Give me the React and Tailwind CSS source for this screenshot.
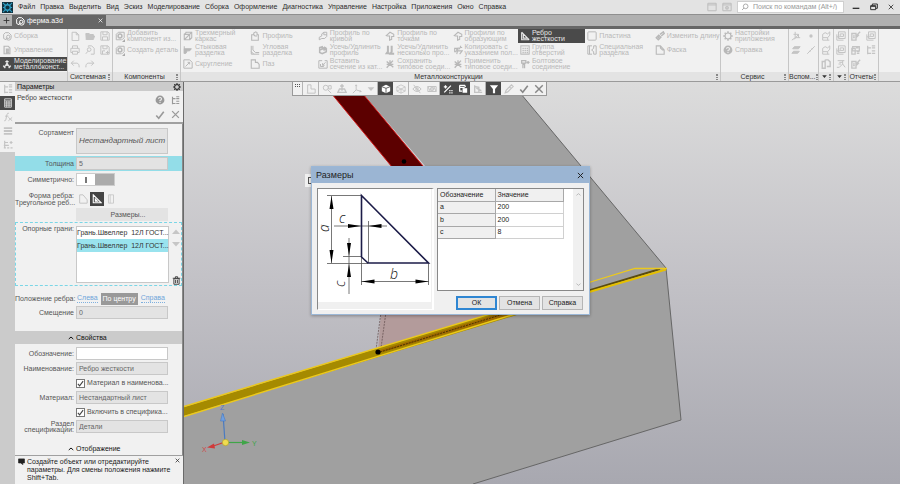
const PATHS = {
  assembly: <><path d="M2 9V4l2-2h4l3 3v3a3 3 0 0 1-6 0" /><circle cx="7.5" cy="7" r="2" /><path d="M2 9l3 1.500" /></>,
  manage: <path d="M2.500 1.500h5l2 2v7h-7z M4.500 5h4M4.500 7h4M4.500 9h4M5.500 5v5M7.200 5v5" strokeWidth="1.400" />,
  metal: <><path d="M6 1.500v5M6 6.500L2 10M6 6.500l4 3.500M4 3l4 0M1.500 8l2.500 3M10.500 8L8 11" strokeWidth="1.500" /><circle cx="6" cy="6.500" r="1.200" fill="currentColor" /></>,
  file: <path d="M2.500 1.500h5l3 3v7h-8z M7.500 1.500v3h3" />,
  folder: <path d="M1 3h4l1 1.200h4V6H3L1.500 10zM3.200 6H11.500L10 10.200H1.500z" fill="currentColor" />,
  save: <path d="M1 1h8.500L11 2.500V11H1zM3.500 1v3.500h5V1M3 11V7h6v4" />,
  saveall: <path d="M1 1h8.500L11 2.500V11H1zM3.500 1v3.500h5V1M3 11V7h3M7 9h4M9 7v4" />,
  print: <path d="M3 4V1h6v3M3 9H1V4h10v5H9M3 7.500h6V11H3z" />,
  preview: <><path d="M4 2V1h4l3 3v7H7" /><circle cx="5" cy="5.500" r="2.200" /><path d="M3.500 7.500L1 10.500" /></>,
  undo: <path d="M4.500 2L1.500 5l3 3M1.500 5H8q3 0 3 5" />,
  redo: <path d="M7.500 2l3 3-3 3M10.500 5H4Q1 5 1 10" />,
  gearbox: <><path d="M1.500 4V10.500H8M1.500 4L4 1.500h7V8L8.500 10.500" /><circle cx="6" cy="6" r="2.300" strokeWidth="1.800" /></>,
  frame: <path d="M1.500 4h6.500v6.500H1.500zM1.500 4L4 1.500h6.500V8L8 10.500M8 4l2.500-2.500M1.500 10.500L8 4M3 1.500h2" strokeWidth="1.300" />,
  butt: <path d="M1.500 1.500v9M1.500 4.500H10L8 7H5L3.500 10H1.500z" fill="currentColor" />,
  fillet: <path d="M1 1h7l3 3v7H1zM3 9l5-5M5.500 4H8v2.500" />,
  profile: <path d="M2 4.500V11h8V4.500H8.500V2L7 1 4.500 2.500v2z M4.500 4.500l1.500 1.500h2.500" strokeWidth="1.300" />,
  corner: <path d="M1.500 1v10H11M3.500 1v5L6.500 9H11M1.500 8l3 3" />,
  groove: <path d="M1.500 1h5v3h2.500l2 2.500V11h-9.500z" strokeWidth="1.300" />,
  curve: <path d="M1.500 10.500V7.500l3-1.500V3.500L7 1.500h3.500v5L8 9H4.500zM7 1.500v3H10.500" />,
  points: <path d="M1.500 5.500L6 1.500 10.500 4v2.500H8V10L5.500 11V6H3z" strokeWidth="1.300" />,
  trim: <path d="M2 3v6l3 1.500 5-2.500V5L7.500 6V3L5 4.500V2zM2 6l8-3" strokeWidth="1.800" />,
  bars: <path d="M3.500 1v7L2 10h3.500M8 1v7L6.500 10.500H11" strokeWidth="2.400" />,
  copy: <path d="M2 4h3L3.500 8H2zM7.500 5l2-4M5 7h6L8 11M6.500 3l-2 8M9 3h2" strokeWidth="1.300" />,
  insert: <path d="M1 2h4M8 2h3v9H1V2M3 6v3h4M9 4L5.500 7.500M5.500 5v2.500H8" />,
  cross: <path d="M2 10.500L9.500 2M2 3l8 7M6 1.500v4M2 6.500h8" strokeWidth="1.600" />,
  rib: <path d="M2 1.500V10.500H11M4 3.500l5 5H4z M2 1.500l2 2M9 8.500l2 2" strokeWidth="1.400" />,
  holes: <><rect x="1" y="1" width="10" height="10" /><path d="M3 4h1.500M5.500 4H7M8 4h1.500M3 6.500h1.500M5.500 6.500H7M8 6.500h1.500M3 9h1.500M5.500 9H7M8 9h1.500" strokeWidth="1.600" /></>,
  bolt: <path d="M2 2h5v3H2zM3 6.500h3M3.500 5v6M5.500 5v6M8 4h3.500M9.700 2.500v3.500" strokeWidth="1.500" />,
  plate: <rect x="1" y="1" width="10" height="10" rx="1" />,
  special: <path d="M6 1H1v10h5M11 1H8v3L5.500 6 8 8v3h3zM3 1v10" />,
  length: <path d="M1.500 8L4.500 5l2.500 2.500L4 10.500zM6 4l4-3 1 2-3.500 3M3 6.500l2 2" strokeWidth="1.700" />,
  chamfer: <path d="M1.500 1h5l4.500 5V11H1.500z M6.500 1v2.500L9 6h2" strokeWidth="1.300" />,
  gear: <><circle cx="6" cy="6" r="3.600" strokeWidth="1.400" /><path d="M6 .3v2M6 9.700v2M.3 6h2M9.700 6h2M2 2l1.300 1.300M8.700 8.700L10 10M10 2L8.700 3.300M3.300 8.700L2 10" strokeWidth="1.700" /></>,
  help: <><circle cx="6" cy="6" r="5.300" fill="currentColor" stroke="none" /><path d="M4.200 4.600Q4.300 3 6 3t1.800 1.500T6 6.500v1M6 8.500v1.200" stroke="#f1f1f1" strokeWidth="1.300" /></>,
  axis: <path d="M5 1v7L1 11M5 8h6M3 4h6v4M9 4L4 10" />,
  dot: <circle cx="6" cy="6" r="2" fill="currentColor" stroke="none" />,
  planes: <path d="M4 2h7L9 4.500H2zM3 7.500h7L8 10H1z" fill="currentColor" />,
  line: <path d="M1.500 10.500l9-9M3.500 7.500h2M6.500 4.500h2" />,
  sketch: <path d="M2 4l3-2 3 1.500L10.500 1v4L8 8H2zM2 8v3h8M8 8v3" />,
  pages: <path d="M1.500 3H5v8H1.500zM5 1h3.500L11 3.500V9H7M5 1v8" strokeWidth="1.700" />,
  sheet: <path d="M3 1h8v8H3zM1 4v7h8M5 3.500h4v3H5zM1 7h4" />,
  flow: <path d="M2 2h8M8 2v4L4 10H1M6 6H3M8 6l3 4M4 4h4" />,
  note: <path d="M1 3h5v8H1zM8 4l3-3M6 6l2-2 1 1-2 2zM2.500 6h2M2.500 8h2" strokeWidth="1.600" />,
  report: <path d="M2 2h8v5H2zM1 4h4v7H1zM7 8h3M7 10h3M6 3.500h3" strokeWidth="1.500" />,
  tree: <path d="M2 1v10M2 3.500h4M2 10h4M7 3.500h4M7 1h4M7 10h4M7 7h4" strokeWidth="1.500" />,
  grid: <path d="M2 1h8v10H2zM2 3.500h8M2 6h8M2 8.500h8M4.500 3.500V11M7.200 3.500V11" strokeWidth="1" />,
  rows: <path d="M1 2.500h10M1 6h10M1 9.500h10" strokeWidth="2.200" />,
  treeplus: <path d="M2 1v8M2 3h4M8 3h3.500M9.700 1.200v3.600M1 9.500h2.500M5 9.500h2.500M9 9.500h2.500M1 6.500h6" strokeWidth="1.400" />,
  fx: <path d="M7 1.500Q5.200 1 4.800 3L3.300 9.500Q2.800 11 1.500 10.500M2.500 5h4M6.500 6.500l4.500 4M11 6.500l-4.500 4" />,
  check: <path d="M1.500 6.500l3 3.500L10.500 2" strokeWidth="1.900" />,
  x: <path d="M1.500 1.500l9 9M10.500 1.500l-9 9" strokeWidth="1.700" />,
  lshape: <path d="M2 1h4v5h5v5H2zM1 11h1" />,
  zoomin: <><circle cx="4.500" cy="4.500" r="3" /><path d="M7 7l4 4M8 2v4h3V2z" /></>,
  plane: <path d="M3 6h6l2 4H1zM6 8V1M4 3l2-2 2 2" strokeWidth="1.700" />,
  axes: <path d="M5 1v6l6 2M5 7l-4 4M4 2.500L5 1l1 1.500M9.500 7.500L11 9l-2 .5" />,
  cube: <><path d="M6 1l5 2.200v5.600L6 11 1 8.800V3.200z" fill="currentColor" stroke="none" /><path d="M1 3.200l5 2 5-2M6 5.200V11" stroke="#4a4a4a" strokeWidth="1" /></>,
  wirecube: <path d="M6 1l5 2.500v5L6 11 1 8.500v-5zM1 3.500L6 6l5-2.500M6 6v5M1 8.500L6 6l5 2.500" strokeWidth="1" />,
  eyeoff: <><path d="M1 6q5-6 10 0Q6 12 1 6M2 1l8 10" /><circle cx="6" cy="6" r="1.500" /></>,
  hidden: <><path d="M1 3h10v6H1zM1 3l3 6M8 3l3 6" /><circle cx="6" cy="6" r="1.700" strokeWidth="1.600" /></>,
  snap: <path d="M1.500 10l8-8M1 3.500h4M3 1.500v4M7.500 8h1.500M10 8h1.500M7.500 10.500h1.500M10 10.500h1.500" strokeWidth="1.500" />,
  view: <><path d="M2 1.500h6l1 2M2 1.500v7h3M2 4h6" strokeWidth="1.500" /><rect x="5.500" y="5" width="5.500" height="5.500" fill="currentColor" stroke="none" /></>,
  section: <path d="M2 1.500V10h9M2 3l5 1v6M4 5l6 3" strokeWidth="1.600" />,
  filter: <path d="M1 1.500h10L7.300 6v5H4.700V6z" fill="currentColor" stroke="none" />,
  pipette: <path d="M1.500 10.500l1-3 4-4 2 2-4 4zM7 3l2-2 2 2-2 2" strokeWidth="1.400" />,
  window: <path d="M1 1.500h10v9H1zM1 3.500h10" />,
  windowgear: <><path d="M1 1.500h10v9H1zM1 3.500h10" /><circle cx="6" cy="7" r="1.500" strokeWidth="1.500" /></>,
  search: <><circle cx="7" cy="5" r="3.500" /><path d="M4.500 7.500l-3 3" /></>,
  minus: <path d="M1 8h10" strokeWidth="2" />,
  restore: <path d="M1 4h7.500v6H1zM3.500 4V1.500H11V8H8.500M1 5h7.500" strokeWidth="1.500" />,
  plus: <path d="M6 1v10M1 6h10" strokeWidth="1.500" />,
  trash: <path d="M2.500 3.500h7v7.500h-7zM1 3h10M4.500 3V1h3v2M4.800 5v4.500M7.200 5v4.500" strokeWidth="1.300" />,
  speech: <path d="M1 1.500h10v7H7.500l1 2.800L4.500 8.500H1z" fill="currentColor" />,
  caret: <path d="M1.500 8L6 4l4.500 4" strokeWidth="2" />,
  down: <path d="M2 4h8L6 8.500z" fill="currentColor" stroke="none" />,
  shape1: <path d="M2 1h4l5 6v4H2z" />,
  shape2: <path d="M1.500 1v9.500H11zM4 6v2.500h2.500z" strokeWidth="1.300" />,
  shape3: <path d="M3 1h6v10H3zM5 1v10" strokeWidth="1" />,
  scrollup: <path d="M2.500 7.500L6 4.500l3.500 3" strokeWidth="1.300" />,
  scrolldown: <path d="M2.500 4.500L6 7.500l3.500-3" strokeWidth="1.300" />,
};

function Icon({ name, className = "size-[10px]" }) {
  return (
    <svg viewBox="0 0 12 12" className={`shrink-0 ${className}`} fill="none" stroke="currentColor" strokeWidth="1.200" aria-hidden="true">
      {PATHS[name]}
    </svg>
  );
}

const MENU = ["Файл", "Правка", "Выделить", "Вид", "Эскиз", "Моделирование", "Сборка", "Оформление", "Диагностика", "Управление", "Настройка", "Приложения", "Окно", "Справка"];

function MenuBar() {
  return (
    <header className="flex h-[15px] items-center border-b border-[#8f8f8f] bg-[#e3e3e3] pl-[2px]">
      <svg viewBox="0 0 12 12" className="mr-[5px] size-[11px] shrink-0" aria-hidden="true">
        <rect width="12" height="12" fill="#12323f" />
        <circle cx="6" cy="6" r="3" fill="none" stroke="#2f9fc4" strokeWidth="1.400" />
        <path d="M1 1l3 3M11 1L8 4M1 11l3-3M11 11L8 8M6 1v2M6 9v2M1 6h2M9 6h2" stroke="#2f9fc4" strokeWidth="1.100" />
      </svg>
      <nav className="flex gap-[5px] text-[#2c2c2c]">
        {MENU.map((m) => <button key={m}>{m}</button>)}
      </nav>
      <div className="ml-auto flex items-center gap-[5px] text-[#bdbdbd]">
        <Icon name="window" />
        <Icon name="windowgear" />
        <label className="flex h-3 w-[107px] items-center gap-1 border border-[#cfcfcf] bg-white px-[3px] text-[#999]">
          <Icon name="search" className="size-2" />
          <input aria-label="Поиск по командам" placeholder="Поиск по командам (Alt+/)" className="w-full min-w-0 bg-transparent outline-none placeholder:text-[#999]" />
        </label>
      </div>
      <div className="flex gap-[10px] pr-[6px] pl-[8px] text-[#333]">
        <button aria-label="Свернуть"><Icon name="minus" className="size-2" /></button>
        <button aria-label="Восстановить"><Icon name="restore" className="size-2" /></button>
        <button aria-label="Закрыть"><Icon name="x" className="size-[6px]" /></button>
      </div>
    </header>
  );
}

function TabBar() {
  return (
    <div className="flex h-[14px] border-b-[3px] border-[#666] bg-[#b0b0b0]">
      <button aria-label="Новый документ" className="flex w-3 items-center justify-center text-[#333]"><Icon name="plus" className="size-[7px]" /></button>
      <div className="flex w-[94px] items-center gap-[2px] bg-[#666] px-[3px] text-white">
        <Icon name="assembly" />
        <span className="flex-1">ферма.a3d</span>
        <button aria-label="Закрыть вкладку"><Icon name="x" className="size-[5px]" /></button>
      </div>
    </div>
  );
}

function Tool({ icon, text, active, tick }) {
  return (
    <button className={`relative flex h-[14px] w-full min-w-0 items-center gap-[2px] pl-[2px] text-left leading-[6px] whitespace-pre ${active ? "bg-[#4a4a4a] text-[#e8e8e8]" : "text-[#b8b8b8]"}`}>
      <Icon name={icon} />
      <span>{text}</span>
      {tick && <i className="absolute bottom-px left-[9px] border-b-[3px] border-l-[3px] border-b-[#aaa] border-l-transparent" />}
    </button>
  );
}

function Group({ title, width, children, grip = true, caret }) {
  return (
    <section className={`flex h-full flex-col border-r border-[#c6c6c6] ${width}`}>
      <div className="h-[43px]">{children}</div>
      <footer className="flex h-[9px] items-center bg-[#e3e3e3] pr-[2px] leading-none text-[#333]">
        <span className="flex flex-1 justify-center whitespace-nowrap">{caret ? <Icon name="down" className="size-[7px]" /> : title}</span>
        {grip && <span className="h-[6px] w-[2px] border-x border-dotted border-[#888]" />}
      </footer>
    </section>
  );
}

function IconGrid({ cols, icons }) {
  return (
    <div className={`grid h-[42px] grid-rows-3 place-items-center text-[#c4c4c4] ${cols}`}>
      {icons.map((n, i) => (
        <button key={i} aria-label={n}><Icon name={n} /></button>
      ))}
    </div>
  );
}

const METAL = [
  [["frame", "Трехмерный\nкаркас"], ["butt", "Стыковая\nразделка"], ["fillet", "Скругление"]],
  [["profile", "Профиль"], ["corner", "Угловая\nразделка"], ["groove", "Паз"]],
  [["curve", "Профиль по\nкривой"], ["trim", "Усечь/Удлинить\nпрофиль"], ["insert", "Вставить\nсечение из кат..."]],
  [["points", "Профиль по\nточкам"], ["bars", "Усечь/Удлинить\nнесколько про..."], ["cross", "Сохранить\nтиповое соеди..."]],
  [["points", "Профили по\nобразующим"], ["copy", "Копировать с\nуказанием пол..."], ["cross", "Применить\nтиповое соеди..."]],
  [["rib", "Ребро\nжесткости", true], ["holes", "Группа\nотверстий"], ["bolt", "Болтовое\nсоединение"]],
  [["plate", "Пластина"], ["special", "Специальная\nразделка"]],
  [["length", "Изменить длину"], ["chamfer", "Фаска"]],
];

function Ribbon() {
  return (
    <div className="flex h-[53px] border-b border-[#9a9a9a] bg-[#f1f1f1]">
      <Group width="w-[68px]" grip={false}>
        <Tool icon="assembly" text="Сборка" />
        <Tool icon="manage" text="Управление" />
        <Tool icon="metal" text={"Моделирование\nметаллоконст..."} active />
      </Group>
      <Group title="Системная" width="w-[45px]">
        <IconGrid cols="grid-cols-3" icons={["file", "folder", "save", "print", "preview", "saveall", "undo", "redo"]} />
      </Group>
      <Group title="Компоненты" width="w-[68px]">
        <Tool icon="gearbox" text={"Добавить\nкомпонент из..."} tick />
        <Tool icon="gearbox" text="Создать деталь" tick />
      </Group>
      <Group title="Металлоконструкции" width="min-w-0 flex-1">
        <div className="grid grid-cols-8">
          {METAL.map((col, i) => (
            <div key={i} className="min-w-0">
              {col.map(([icon, text, active]) => <Tool key={text} icon={icon} text={text} active={active} />)}
            </div>
          ))}
        </div>
      </Group>
      <Group title="Сервис" width="w-[68px]">
        <Tool icon="gear" text={"Настройки\nприложения"} />
        <Tool icon="help" text="Справка" />
      </Group>
      <Group title="Вспом..." width="w-[30px]">
        <IconGrid cols="grid-cols-2" icons={["axis", "dot", "planes", "line"]} />
      </Group>
      <Group caret width="w-[15px]"><IconGrid cols="grid-cols-1" icons={["sketch", "sketch", "pages"]} /></Group>
      <Group caret width="w-[15px]"><IconGrid cols="grid-cols-1" icons={["sheet", "sheet", "flow"]} /></Group>
      <Group title="Отчеты" width="w-[30px]">
        <IconGrid cols="grid-cols-2" icons={["note", "sheet", "report", "tree", "note"]} />
      </Group>
      <div className="flex w-[21px] flex-col justify-end"><div className="h-[9px] bg-[#e3e3e3]" /></div>
    </div>
  );
}

const SIDE = ["tree", "grid", "fx", "rows", "treeplus"];

function SideStrip() {
  return (
    <aside className="w-[15px] shrink-0 bg-[#cbcbcb]">
      {SIDE.map((n) => (
        <button key={n} aria-label={n} className={`flex h-[14px] w-full items-center justify-center ${n === "grid" ? "bg-[#4a4a4a] text-[#e8e8e8]" : "bg-[#f1f1f1] text-[#c4c4c4]"}`}>
          <Icon name={n} />
        </button>
      ))}
    </aside>
  );
}

function Field({ id, label, value, open, tint }) {
  return (
    <div className={`flex items-center gap-[2px] py-px pr-[14px] ${tint ? "bg-[#93dde8]" : ""}`}>
      <label htmlFor={id} className="w-[59px] shrink-0 text-right leading-[6px] whitespace-pre">{label}</label>
      <input id={id} defaultValue={value} className={`h-[13px] min-w-0 flex-1 border border-[#c8c8c8] px-[2px] text-[#666] outline-none ${open ? "bg-white" : "bg-[#e3e3e3]"}`} />
    </div>
  );
}

function Tick({ id, text }) {
  return (
    <label htmlFor={id} className="flex h-[14px] items-center gap-[2px] pl-[61px]">
      <span className="relative flex size-[9px] shrink-0">
        <input id={id} type="checkbox" defaultChecked className="size-[9px] appearance-none border border-[#777] bg-white" />
        <span className="pointer-events-none absolute inset-px text-[#444]"><Icon name="check" className="size-[7px]" /></span>
      </span>
      <span className="whitespace-nowrap">{text}</span>
    </label>
  );
}

function Panel() {
  return (
    <section className="flex w-[169px] shrink-0 flex-col border-r border-[#6a6a6a] bg-[#f1f1f1] text-[#555]">
      <h2 className="flex h-[9px] items-center justify-between bg-[#cbcbcb] px-[2px] leading-none text-[#111]">
        Параметры
        <button aria-label="Настройки панели"><Icon name="gear" className="size-2" /></button>
      </h2>
      <div className="flex h-[33px] justify-between border-b-2 border-[#a0a0a0] pt-[2px] pr-[3px] pl-[2px] text-[#444]">
        <span>Ребро жесткости</span>
        <div className="grid grid-cols-2 place-items-center gap-x-[5px] text-[#999]">
          <button aria-label="Справка"><Icon name="help" /></button>
          <button aria-label="Дерево"><Icon name="tree" className="size-[9px]" /></button>
          <button aria-label="Создать"><Icon name="check" /></button>
          <button aria-label="Отменить"><Icon name="x" className="size-[9px]" /></button>
        </div>
      </div>

      <div className="flex flex-1 flex-col border-r border-[#8a8a8a] pt-[4px]">
        <div className="mb-[2px] flex gap-[2px] pr-[14px]">
          <span className="w-[59px] shrink-0 text-right">Сортамент</span>
          <button className="h-[26px] min-w-0 flex-1 border border-[#c8c8c8] bg-[#e3e3e3] text-[8px] whitespace-nowrap text-[#555] italic">Нестандартный лист</button>
        </div>
        <Field id="thickness" label="Толщина" value="5" tint />
        <div className="mt-[2px] flex items-center gap-[2px]">
          <span className="w-[59px] text-right">Симметрично:</span>
          <button role="switch" aria-checked="false" aria-label="Симметрично" className="flex h-[13px] w-[39px] border border-[#ccc] bg-[#ababab]">
            <span className="flex h-full w-[18px] items-center justify-center bg-white"><i className="h-[6px] w-[2px] bg-[#777]" /></span>
          </button>
        </div>
        <div className="mt-[6px] flex items-center gap-[2px]">
          <span className="w-[59px] text-right leading-[7px] whitespace-nowrap">Форма ребра:<br />Треугольное реб...</span>
          <div className="flex text-[#c4c4c4]">
            <button aria-label="Срез" className="flex size-[14px] items-center justify-center"><Icon name="shape1" /></button>
            <button aria-label="Треугольник" className="flex size-[14px] items-center justify-center bg-[#444] text-white"><Icon name="shape2" /></button>
            <button aria-label="Прямоугольник" className="flex size-[14px] items-center justify-center"><Icon name="shape3" /></button>
          </div>
        </div>
        <button className="mt-[2px] mr-[14px] ml-[61px] h-[13px] bg-[#e3e3e3] pl-3">Размеры...</button>
        <div className="mt-px flex h-[64px] gap-[2px] border border-dashed border-[#7ad6e6] pt-[3px]">
          <span className="w-[58px] shrink-0 text-right leading-[6px] whitespace-nowrap">Опорные грани:</span>
          <ul className="mb-[2px] min-w-0 flex-1 border border-[#c8c8c8] bg-white text-[#333]">
            <li className="flex h-[12px] items-center whitespace-pre">Грань.Швеллер  12Л ГОСТ...</li>
            <li className="flex h-[13px] items-center bg-[#99e3ee] whitespace-pre">Грань.Швеллер  12Л ГОСТ...</li>
          </ul>
          <div className="flex w-[10px] shrink-0 flex-col items-center text-[#c6c6c6]">
            <button aria-label="Вверх" className="rotate-180"><Icon name="down" className="size-3" /></button>
            <button aria-label="Вниз"><Icon name="down" className="size-3" /></button>
            <button aria-label="Удалить" className="mt-auto text-[#444]"><Icon name="trash" className="size-[9px]" /></button>
          </div>
        </div>
        <div className="mt-[6px] flex h-[13px] items-center gap-[3px] whitespace-nowrap">
          <span className="w-[59px] shrink-0 text-right">Положение ребра:</span>
          <a href="#left" className="border-b border-dotted border-[#7fb0de] leading-[8px] text-[#6fa5da]">Слева</a>
          <button className="h-[12px] bg-[#999] px-[2px] text-white">По центру</button>
          <a href="#right" className="border-b border-dotted border-[#7fb0de] leading-[8px] text-[#6fa5da]">Справа</a>
        </div>
        <Field id="offset" label="Смещение" value="0" />
        <h3 className="mt-[11px] flex h-[13px] items-center gap-[2px] bg-[#cbcbcb] pl-[53px] text-[#111]"><Icon name="caret" className="size-[6px]" />Свойства</h3>
        <div className="mt-[2px]">
          <Field id="mark" label="Обозначение:" value="" open />
          <Field id="name" label="Наименование:" value="Ребро жесткости" />
          <Tick id="matname" text="Материал в наименова..." />
          <Field id="material" label="Материал:" value="Нестандартный лист" />
          <Tick id="spec" text="Включить в специфика..." />
          <Field id="section" label={"Раздел\nспецификации:"} value="Детали" />
        </div>
        <h3 className="mt-[8px] flex h-[13px] items-center gap-[2px] pl-[53px] text-[#111]"><Icon name="caret" className="size-[6px]" />Отображение</h3>
      </div>

      <div className="flex h-[29px] gap-[2px] border-t border-[#a0a0a0] px-[3px] pt-[2px] leading-[8px] text-[#222]">
        <Icon name="speech" className="size-[7px]" />
        <p className="flex-1 whitespace-pre">{"Создайте объект или отредактируйте\nпараметры. Для смены положения нажмите\nShift+Tab."}</p>
        <button aria-label="Закрыть подсказку" className="h-[5px]"><Icon name="x" className="size-[5px]" /></button>
      </div>
    </section>
  );
}

function Scene() {
  return (
    <svg viewBox="184 82 716 402" preserveAspectRatio="xMinYMin slice" className="absolute inset-0 h-full w-full" role="img" aria-label="Модель фермы">
      <defs>
        <linearGradient id="sky" x1="0" y1="0" x2="0" y2="1">
          <stop offset="0" stopColor="#dcdcdc" />
          <stop offset=".5" stopColor="#c2c1c6" />
          <stop offset="1" stopColor="#a8a8b0" />
        </linearGradient>
      </defs>
      <rect x="184" y="82" width="716" height="402" fill="url(#sky)" />
      <path d="M353 82H511L666 268 681 420 473 484H184V416L480 318V230z" fill="#a0a0a0" />
      <path d="M511 82L666 268 681 420 473 484" fill="none" stroke="#666" strokeWidth="1" />
      <path d="M322 82H353L438 184H406z" fill="#5c0000" stroke="#d01818" strokeWidth="1" />
      <path d="M381 312H500L378 351z" fill="#b39b9b" />
      <path d="M381 312L376 350M386 312L381 348" stroke="#6b5555" strokeWidth=".8" strokeDasharray="2 1" />
      <path d="M184 407L520 305 590 291 520 314 184 416z" fill="#a58a00" />
      <path d="M380 350L520 307V312L380 353z" fill="#a06a00" />
      <path d="M380 352L520 309" stroke="#4a3600" strokeWidth="1" strokeDasharray="2 1" />
      <path d="M184 406.500L520 305M184 416.500L520 312.500" stroke="#ecc91c" strokeWidth="1.400" />
      <path d="M584 292L660 269" stroke="#5a4c10" strokeWidth="2" />
      <path d="M584 293.500L666 269.500" stroke="#e6c000" strokeWidth="2" />
      <path d="M584 284L635 268.500H667" fill="none" stroke="#ecc91c" strokeWidth="1.300" />
      <circle cx="378" cy="352" r="2.600" />
      <circle cx="404" cy="161.500" r="2.300" />
      <g strokeWidth="1.200">
        <path d="M225 442L223 414" stroke="#4a7ac0" />
        <path d="M220.500 421L222.500 413 225.500 421z" fill="#6f9fe0" stroke="#4a7ac0" strokeWidth=".6" />
        <path d="M225 442.500H246" stroke="#3fa548" />
        <path d="M242 440L250 442.500 242 445z" fill="#3fa548" />
        <path d="M225 442L212 446.500" stroke="#d03a3a" />
        <path d="M214 443.500L207 447.500 215 448.500z" fill="#d03a3a" />
        <circle cx="225.500" cy="442.500" r="3.200" fill="#f0dc50" stroke="#a89828" strokeWidth=".6" />
      </g>
      <g fontSize="7" fontFamily="Liberation Sans, sans-serif">
        <text x="220" y="410" fill="#5577cc">Z</text>
        <text x="252" y="446" fill="#3fa548">Y</text>
        <text x="202" y="452" fill="#d04a4a">X</text>
      </g>
    </svg>
  );
}

const TOOLBAR = [
  ["lshape"],
  ["zoomin", "plane", "axes", "down"],
  ["cube*", "wirecube"],
  ["eyeoff", "hidden"],
  ["snap*", "view*", "section"],
  ["filter*", "pipette", "check!", "x!"],
];

function ViewToolbar() {
  return (
    <div className="absolute top-0 left-[108px] flex h-[14px] border border-t-0 border-[#999] bg-[#f1f1f1]">
      <span className="w-[9px] p-[2px]"><i className="block h-[3px] border-y border-dotted border-[#555]" /></span>
      {TOOLBAR.map((g, i) => (
        <div key={i} className="flex border-l border-[#b5b5b5]">
          {g.map((n) => {
            const on = n.endsWith("*");
            const tone = on ? "bg-[#4a4a4a] text-white" : n.endsWith("!") ? "text-[#888]" : "text-[#c4c4c4]";
            return (
              <button key={n} aria-label={n} className={`flex h-[13px] items-center justify-center ${n === "down" ? "w-[13px]" : "w-[15px]"} ${tone}`}>
                <Icon name={n.replace(/[*!]/, "")} />
              </button>
            );
          })}
        </div>
      ))}
    </div>
  );
}

function RibDrawing() {
  return (
    <svg viewBox="317 189 113 113" className="h-[113px] w-[113px] overflow-visible bg-white" role="img" aria-label="Эскиз ребра с размерами a, b, c">
      <g stroke="#555" strokeWidth=".8" fill="none">
        <path d="M326 195.500H360M326 263.500H367M330.500 196V263M333 226H386M367.500 221V263M342 256.500H361M348 238V294M360.500 257V285M427.500 263V285M360 281.500H428" />
      </g>
      <path d="M360.500 195.500L427.500 263H367L360.500 257z" fill="none" stroke="#1c1c48" strokeWidth="1.600" />
      <g fill="#000">
        <path d="M330.500 196l-2 13h4zM330.500 263l-2-13h4zM360 226l-13-2v4zM367.500 226l13-2v4zM348 256l-2-13h4zM348 264l-2 13h4zM360.500 281.500l13-2v4zM427.500 281.500l-13-2v4z" />
      </g>
      <g fontSize="14" fontStyle="italic" fontFamily="Open Sans, Noto Sans, sans-serif" fontWeight="300" fill="#111">
        <text x="338" y="223">c</text>
        <text x="389" y="279">b</text>
        <text transform="translate(328 232) rotate(-90)">a</text>
        <text transform="translate(344 287) rotate(-90)">c</text>
      </g>
    </svg>
  );
}

function Dialog() {
  return (
    <div role="dialog" aria-label="Размеры" className="absolute top-[84px] left-[127px] w-[279px] border border-[#9bb7d6] bg-[#f0f0f0] text-[#222] shadow-[0_1px_3px_rgba(0,0,0,0.3)]">
      <div className="flex h-[16px] items-center justify-between bg-[#9bb5d3] pr-[5px] pl-[4px] text-[9px] text-[#222]">
        Размеры
        <button aria-label="Закрыть"><Icon name="x" className="size-[7px]" /></button>
      </div>
      <div className="flex gap-[3px] p-[5px] pb-[4px]">
        <div className="h-[122px] w-[117px] border-t border-r-2 border-b border-l border-t-[#888] border-r-white border-b-white border-l-[#888]"><RibDrawing /></div>
        <div className="flex flex-1 flex-col">
          <div className="flex h-[103px] justify-between border border-[#888] bg-white">
            <table className="h-[50px] w-[126px] border-collapse text-left">
              <thead>
                <tr className="h-[12px] bg-[#f0f0f0]">
                  <th className="w-[57px] border-r border-b border-[#a8a8a8] px-[2px] py-0 leading-[10px] font-normal">Обозначение</th>
                  <th className="border-r border-b border-[#a8a8a8] px-[2px] py-0 leading-[10px] font-normal">Значение</th>
                </tr>
              </thead>
              <tbody>
                {[["a", 200], ["b", 200], ["c", 8]].map(([k, v]) => (
                  <tr key={k}>
                    <th className="border-r border-b border-[#a8a8a8] bg-[#f0f0f0] px-[2px] py-0 leading-[10px] font-normal">{k}</th>
                    <td className="border-r border-b border-[#d0d0d0] px-[2px] py-0 leading-[10px]">{v}</td>
                  </tr>
                ))}
              </tbody>
            </table>
            <div className="flex w-[10px] flex-col items-center justify-between bg-[#f0f0f0] py-[2px] text-[#aaa]">
              <Icon name="scrollup" className="size-[7px]" />
              <Icon name="scrolldown" className="size-[7px]" />
            </div>
          </div>
          <div className="mt-[5px] flex justify-end gap-[2px] pr-px">
            {["ОК", "Отмена", "Справка"].map((b) => (
              <button key={b} className={`h-[14px] w-[41px] bg-[#e3e3e3] ${b === "ОК" ? "border-2 border-[#2f86d2]" : "border border-[#b5b5b5]"} flex items-center justify-center`}>{b}</button>
            ))}
          </div>
        </div>
      </div>
    </div>
  );
}

export default function App() {
  return (
    <div className="flex min-h-screen flex-col overflow-hidden font-['Liberation_Sans','Noto_Sans',sans-serif] text-[7px] leading-[10px]">
      <MenuBar />
      <TabBar />
      <Ribbon />
      <main className="flex flex-1">
        <SideStrip />
        <Panel />
        <div className="relative flex-1 overflow-hidden">
          <Scene />
          <ViewToolbar />
          <div className="absolute top-[92px] left-[121px] h-[13px] w-[10px] bg-[#f0f0f0] p-[3px]"><i className="block h-full border border-[#555]" /></div>
          <Dialog />
        </div>
      </main>
    </div>
  );
}
